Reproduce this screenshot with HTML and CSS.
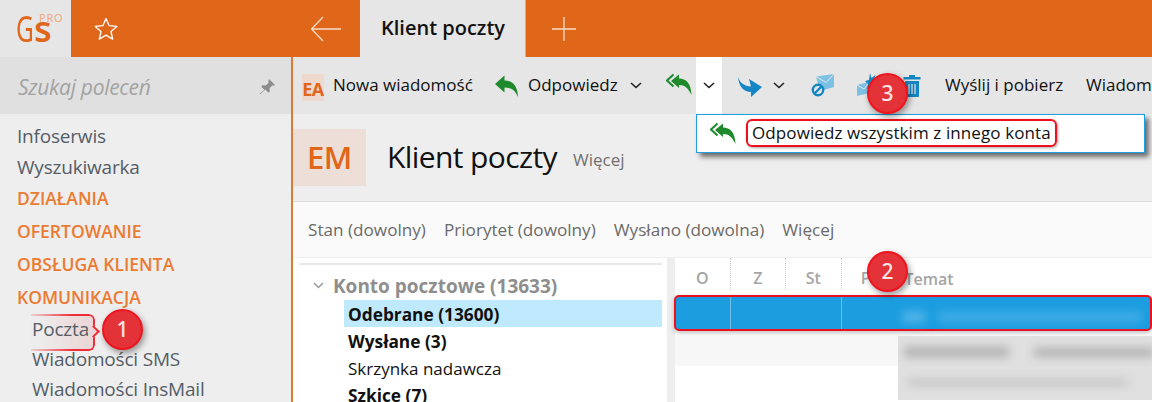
FILE: index.html
```html
<!DOCTYPE html>
<html lang="pl">
<head>
    <meta charset="UTF-8">
    <title>Klient poczty</title>
    <link rel="stylesheet" href="styles.css">
</head>
<body>

    <div class="topbar">
        <div class="logo">
            <span class="logo-g">G</span><span class="logo-s">s</span><span class="logo-pro">PRO</span>
        </div>
        <div class="top-left">
            <svg class="star" width="26" height="26" viewBox="0 0 26 26"><path d="M13 2.500l3.100 7.200 7.700.7-5.800 5.100 1.700 7.600-6.700-4-6.700 4 1.700-7.600-5.800-5.100 7.700-.7z" fill="none" stroke="#fff" stroke-width="1.300" stroke-linejoin="round"/></svg>
            <svg class="back" width="32" height="26" viewBox="0 0 32 26"><path d="M31 13H1.500M13 1L1.500 13 13 25" fill="none" stroke="#f6dcc8" stroke-width="1.300"/></svg>
        </div>
        <div class="tab">Klient poczty</div>
        <div class="top-right">
            <svg width="24" height="24" viewBox="0 0 24 24"><path d="M12 0v24M0 12h24" stroke="#f6dcc8" stroke-width="1.300"/></svg>
        </div>
    </div>

    <div class="shell">
        <div class="sidebar">
            <div class="search">
                <span>Szukaj poleceń</span>
                <svg width="18" height="18" viewBox="0 0 18 18"><path d="M11 1l6 6-1.500.8-1-.6-3 3 .3 3.300-1.300 1.300-3.200-3.200L2 16.500l-.5-.5 4.900-4.300-3.200-3.200 1.300-1.300 3.300.3 3-3-.6-1z" fill="#8c8c8c"/></svg>
            </div>
            <div class="menu">
                <div class="menu-item">Infoserwis</div>
                <div class="menu-item">Wyszukiwarka</div>
                <div class="menu-group">DZIAŁANIA</div>
                <div class="menu-group">OFERTOWANIE</div>
                <div class="menu-group">OBSŁUGA KLIENTA</div>
                <div class="menu-group">KOMUNIKACJA</div>
                <div class="menu-item sub">
                    <span class="poczta">Poczta</span>
                </div>
                <div class="menu-item sub">Wiadomości SMS</div>
                <div class="menu-item sub">Wiadomości InsMail</div>
            </div>
        </div>

        <div class="main">
            <div class="toolbar">
                <span class="tile-small">EA</span>
                <span class="tool-label first">Nowa wiadomość</span>
                <svg class="reply" width="25" height="24" viewBox="0 0 25 24"><path d="M1 10L10.500 1.500V6.500C18 6.500 23.500 11 24 23 21 16 17 13.500 10.500 13.500V18.500Z" fill="#1e8a2c"/></svg>
                <span class="tool-label odp">Odpowiedz</span>
                <svg class="chev odp-chev" width="12" height="7" viewBox="0 0 12 7"><path d="M1 1l5 4.500L11 1" fill="none" stroke="#222" stroke-width="1.600"/></svg>
                <svg class="reply-all" width="26" height="23" viewBox="0 0 26 23"><path d="M7.500 1.500L1 7.500l6.500 6" fill="none" stroke="#1e8a2c" stroke-width="2"/><path d="M5 8L13 1.500V5.500C20 5.500 25 10 25.500 22 22 15 19 12 13 12V15Z" fill="#1e8a2c"/></svg>
                <span class="chev-box">
                    <svg class="chev" width="12" height="7" viewBox="0 0 12 7"><path d="M1 1l5 4.500L11 1" fill="none" stroke="#222" stroke-width="1.600"/></svg>
                </span>
                <svg class="forward" width="26" height="24" viewBox="0 0 26 24"><path d="M1 2C3 8 7 11 14 11.500L12 4 25 12 14 22 14 17C7 17 2 12 1 2Z" fill="#1586c4"/></svg>
                <svg class="chev fwd-chev" width="12" height="7" viewBox="0 0 12 7"><path d="M1 1l5 4.500L11 1" fill="none" stroke="#222" stroke-width="1.600"/></svg>
                <svg class="mail-block" width="24" height="24" viewBox="0 0 24 24"><path d="M5 2.500L23 0V13L9 17Z" fill="#7cc0e4"/><path d="M5 2.500l10 6 8-8.500" fill="none" stroke="#e6e6e6" stroke-width="1"/><circle cx="7" cy="16" r="5.200" fill="#e6e6e6" stroke="#1586c4" stroke-width="2.400"/><path d="M3.500 19.500l7-7" stroke="#1586c4" stroke-width="2.400"/></svg>
                <svg class="mail-star" width="24" height="24" viewBox="0 0 24 24"><path d="M0 12L12 9V20L0 23Z" fill="#7cc0e4"/><path d="M0 12l7 4 5-7" fill="none" stroke="#e6e6e6" stroke-width="1"/><path d="M13 0l1.500 5 4-3-1.500 5 5 .5-4 3 4 3-5 .5-1 5-3-4-3 1 1-5-3-3 4-1z" fill="#1586c4"/></svg>
                <svg class="trash" width="18" height="23" viewBox="0 0 18 23"><path d="M6 1h6v2h5.500v2.500H.5V3H6zM2 7h14v15a1 1 0 0 1-1 1H3a1 1 0 0 1-1-1z" fill="#1586c4"/><path d="M6 10v10M9 10v10M12 10v10" stroke="#e6e6e6" stroke-width="1.200"/></svg>
                <span class="tool-label send">Wyślij i pobierz</span>
                <span class="tool-label wiad">Wiadomości</span>
            </div>

            <div class="heading">
                <span class="tile-big">EM</span>
                <span class="title">Klient poczty</span>
                <span class="more">Więcej</span>
            </div>

            <div class="filters">
                <span>Stan (dowolny)</span>
                <span>Priorytet (dowolny)</span>
                <span>Wysłano (dowolna)</span>
                <span>Więcej</span>
            </div>

            <div class="content">
                <div class="tree">
                    <div class="tree-root">
                        <svg width="11" height="7" viewBox="0 0 11 7"><path d="M1 1l4.500 4.500L10 1" fill="none" stroke="#999" stroke-width="1.500"/></svg>
                        <span>Konto pocztowe (13633)</span>
                    </div>
                    <div class="folder bold selected">Odebrane (13600)</div>
                    <div class="folder bold">Wysłane (3)</div>
                    <div class="folder">Skrzynka nadawcza</div>
                    <div class="folder bold">Szkice (7)</div>
                </div>
                <div class="list">
                    <div class="list-head">
                        <span class="col">O</span>
                        <span class="col">Z</span>
                        <span class="col">St</span>
                        <span class="col">Pr</span>
                        <span class="col-subject">Temat</span>
                    </div>
                    <div class="row-selected">
                        <div class="cell-a"></div>
                        <div class="cell-b"></div>
                        <div class="cell-subject"><i class="blur-light short"></i><i class="blur-light long"></i></div>
                    </div>
                    <div class="row-grey"><div class="blur-block"><i class="blur-dark l1"></i><i class="blur-dark l2"></i><i class="blur-dark l3"></i></div></div>
                </div>
            </div>
        </div>
    </div>

    <div class="dropdown">
        <svg width="26" height="23" viewBox="0 0 26 23"><path d="M7.500 1.500L1 7.500l6.500 6" fill="none" stroke="#1e8a2c" stroke-width="2"/><path d="M5 8L13 1.500V5.500C20 5.500 25 10 25.500 22 22 15 19 12 13 12V15Z" fill="#1e8a2c"/></svg>
        <span class="dropdown-label">Odpowiedz wszystkim z innego konta</span>
    </div>

    <div class="badge badge-1">1</div>
    <div class="badge badge-2">2</div>
    <div class="badge badge-3">3</div>

</body>
</html>
```

FILE: styles.css
```css
* {
    box-sizing: border-box;
}

body {
    margin: 0;
    height: 402px;
    overflow: hidden;
    position: relative;
    font-family: "Open Sans", "Noto Sans", sans-serif;
    background-color: #eeeeee;
    color: #111;
}

/* top bar */
.topbar {
    display: flex;
    height: 57px;
    background-color: #e0661a;
}

.logo {
    width: 71px;
    background-color: #e6e6e6;
    color: #e0661a;
    padding: 8px 0 0 16px;
    position: relative;
    font-family: "Noto Sans", sans-serif;
    line-height: 42px;
    font-size: 36px;
}

.logo-g {
    display: inline-block;
    width: 18px;
    transform: scaleX(0.68);
    transform-origin: left;
}

.logo-s {
    font-weight: 600;
}

.logo-pro {
    position: absolute;
    left: 39px;
    top: 12px;
    font-size: 11px;
    line-height: 11px;
    letter-spacing: 0.8px;
    color: #eeaa7c;
}

.top-left {
    width: 289px;
    display: flex;
    align-items: center;
    padding-left: 22px;
}

.star {
    margin-right: 191px;
}

.tab {
    width: 166px;
    background-color: #e6e6e6;
    border-right: 1px solid #f0a877;
    font-size: 20px;
    font-weight: 600;
    display: flex;
    align-items: center;
    padding-left: 21px;
    padding-bottom: 2px;
}

.top-right {
    flex-grow: 1;
    display: flex;
    align-items: center;
    padding-left: 26px;
}

/* sidebar */
.shell {
    display: flex;
    height: 345px;
}

.sidebar {
    width: 293px;
    flex-shrink: 0;
    border-right: 2px solid #de7a35;
}

.search {
    height: 57px;
    background-color: #e0e0e0;
    color: #a3a3a3;
    font-style: italic;
    font-size: 21px;
    display: flex;
    justify-content: space-between;
    align-items: center;
    padding: 3px 15px 0 18px;
    letter-spacing: -0.3px;
}

.menu {
    padding-top: 8px;
    padding-left: 17px;
}

.menu-item {
    font-size: 19px;
    height: 31px;
    line-height: 28px;
    color: #555d68;
    letter-spacing: -0.2px;
}

.menu-group {
    font-size: 17.500px;
    font-weight: 600;
    height: 33px;
    line-height: 28px;
    color: #ec7a30;
}

.menu-item.sub {
    padding-left: 15px;
    height: 30px;
    line-height: 27px;
}

.poczta {
    position: relative;
    display: inline-block;
    z-index: 0;
}

/* callout round the first step, fades out to the left */
.poczta::before {
    content: '';
    position: absolute;
    z-index: -1;
    left: -1px;
    top: -2px;
    width: 62px;
    height: 33px;
    border: 2px solid #ef2d36;
    border-left: none;
    border-radius: 0 6px 6px 0;
    background: linear-gradient(to right, rgba(240, 215, 215, 0.2), #ead6d6);
    -webkit-mask-image: linear-gradient(to right, rgba(0, 0, 0, 0.15), #000 65%);
    mask-image: linear-gradient(to right, rgba(0, 0, 0, 0.15), #000 65%);
}

.poczta::after {
    content: '';
    position: absolute;
    left: 57px;
    top: 11px;
    width: 7px;
    height: 7px;
    background-color: #ead6d6;
    border-top: 2px solid #ef2d36;
    border-right: 2px solid #ef2d36;
    transform: rotate(45deg);
}

/* main column */
.main {
    flex-grow: 1;
    min-width: 0;
    display: flex;
    flex-direction: column;
}

.toolbar {
    height: 57px;
    flex-shrink: 0;
    background-color: #e6e6e6;
    display: flex;
    align-items: center;
    white-space: nowrap;
    overflow: hidden;
    padding-left: 9px;
    font-size: 17px;
}

.tile-small {
    width: 22px;
    height: 27px;
    background-color: #eed9ce;
    color: #e0661a;
    font-size: 18px;
    font-weight: 700;
    text-align: center;
    line-height: 31px;
    flex-shrink: 0;
    margin-top: 3px;
    letter-spacing: -0.5px;
}

.tool-label {
    flex-shrink: 0;
    margin-top: -3px;
}

.first {
    margin-left: 9px;
    width: 161px;
}

.reply {
    flex-shrink: 0;
}

.odp {
    margin-left: 9px;
    width: 102px;
}

.odp-chev {
    flex-shrink: 0;
}

.reply-all {
    flex-shrink: 0;
    margin-left: 24px;
    margin-top: -3px;
}

.chev-box {
    width: 26px;
    height: 57px;
    flex-shrink: 0;
    margin-left: 4px;
    background-color: #fff;
    display: flex;
    align-items: center;
    justify-content: center;
}

.forward {
    flex-shrink: 0;
    margin-left: 15px;
    margin-top: 2px;
}

.fwd-chev {
    flex-shrink: 0;
    margin-left: 10px;
}

.mail-block {
    flex-shrink: 0;
    margin-left: 26px;
}

.mail-star {
    flex-shrink: 0;
    margin-left: 22px;
    margin-top: -2px;
}

.trash {
    flex-shrink: 0;
    margin-left: 22px;
}

.send {
    margin-left: 24px;
    width: 141px;
}

.wiad {
    flex-shrink: 0;
}

.heading {
    height: 88px;
    flex-shrink: 0;
    display: flex;
    align-items: center;
    background-color: #eeeeee;
    border-bottom: 1px solid #dddddd;
}

.tile-big {
    width: 73px;
    height: 57px;
    background-color: #eddfd7;
    color: #e0661a;
    font-size: 31px;
    font-weight: 600;
    text-align: center;
    line-height: 57px;
    margin-top: -1px;
    letter-spacing: -0.5px;
}

.title {
    font-size: 30px;
    margin-left: 21px;
    letter-spacing: -0.6px;
    margin-top: -2px;
}

.more {
    font-size: 17px;
    color: #707070;
    margin-left: 16px;
    margin-top: 4px;
}

.filters {
    height: 56px;
    flex-shrink: 0;
    background-color: #fafafa;
    border-bottom: 1px solid #eeeeee;
    display: flex;
    align-items: center;
    gap: 18px;
    padding-left: 15px;
    font-size: 17.150px;
    color: #6a6a6a;
}

.content {
    flex-grow: 1;
    display: flex;
    background-color: #fff;
    min-height: 0;
}

.tree {
    width: 382px;
    flex-shrink: 0;
    padding: 5px 5px 0 6px;
    background-color: #fff;
    border-right: 8px solid #eeeeee;
    overflow: hidden;
}

.tree-root {
    border-top: 2px solid #e9e9e9;
    height: 37px;
    padding: 6px 0 0 14px;
    display: flex;
    align-items: center;
    gap: 9px;
    font-size: 19px;
    font-weight: 700;
    color: #8e8e8e;
}

.folder {
    margin-left: 45px;
    height: 27px;
    line-height: 29px;
    padding-left: 4px;
    font-size: 17px;
    white-space: nowrap;
}

.bold {
    font-size: 17.300px;
    font-weight: 700;
}

.selected {
    background-color: #bfeafd;
}

.list {
    flex-grow: 1;
    min-width: 0;
    background-color: #fff;
}

.list-head {
    height: 37px;
    display: flex;
    align-items: center;
    font-size: 16px;
    font-weight: 600;
    color: #a5a5a5;
}

.col {
    width: 55.500px;
    height: 32px;
    margin-bottom: 5px;
    padding-top: 8px;
    border-right: 1px dotted #c8c8c8;
    display: flex;
    align-items: center;
    justify-content: center;
}

.col:nth-child(4) {
    border-right: none;
    width: 55px;
}

.col-subject {
    margin-left: 8px;
    padding-top: 4px;
}

.row-selected {
    height: 36px;
    margin-left: -1px;
    display: flex;
    background-color: #1b9de0;
    border: 2px solid #ef0f1c;
    border-radius: 5px;
    box-shadow: 0 2px 5px rgba(0, 0, 0, 0.25);
}

.cell-a {
    width: 55px;
    border-right: 1px solid #70bde8;
}

.cell-b {
    width: 111px;
    border-right: 1px solid #70bde8;
}

.cell-subject {
    flex-grow: 1;
    display: flex;
    gap: 12px;
    align-items: center;
    padding: 7px 8px 0 60px;
}

.blur-light {
    height: 12px;
    background-color: #4fb3e8;
    filter: blur(4px);
    display: block;
}

.short {
    width: 24px;
}

.long {
    flex-grow: 1;
    background-color: #3eabe5;
}

.row-grey {
    height: 30px;
    margin-top: 5px;
    background-color: #f7f7f7;
    position: relative;
}

.blur-block {
    position: absolute;
    left: 223px;
    right: 0;
    top: 0;
    height: 64px;
    background-color: #e0e0e0;
    overflow: hidden;
}

.blur-dark {
    position: absolute;
    display: block;
    filter: blur(5px);
    background-color: #b0b0b0;
}

.l1 {
    left: 6px;
    top: 11px;
    width: 105px;
    height: 10px;
}

.l2 {
    left: 136px;
    top: 12px;
    width: 120px;
    height: 9px;
}

.l3 {
    left: 10px;
    top: 43px;
    width: 220px;
    height: 7px;
    background-color: #c4c4c4;
}

/* things lying over the page */
.dropdown {
    position: absolute;
    left: 696px;
    top: 114px;
    width: 449px;
    height: 39px;
    background-color: #fff;
    border: 1px solid #1aa0e0;
    box-shadow: 4px 4px 5px rgba(0, 0, 0, 0.55);
    display: flex;
    align-items: center;
    padding-left: 13px;
}

.dropdown-label {
    margin-left: 10px;
    width: 311px;
    height: 28px;
    line-height: 23px;
    border: 2px solid #ef0f1c;
    border-radius: 6px;
    padding-left: 4px;
    font-size: 17px;
    letter-spacing: 0.1px;
    white-space: nowrap;
    box-shadow: 1px 1px 3px rgba(0, 0, 0, 0.35);
    margin-bottom: 1px;
}

.badge {
    position: absolute;
    width: 41px;
    height: 41px;
    border-radius: 50%;
    background-color: #e33238;
    border: 2px solid #f0141e;
    color: #fbe4e4;
    font-family: "Noto Sans", sans-serif;
    font-size: 21px;
    font-weight: 500;
    text-align: center;
    line-height: 36px;
    box-shadow: 2px 3px 6px rgba(0, 0, 0, 0.4);
}

.badge-1 {
    left: 102px;
    top: 309px;
}

.badge-2 {
    left: 867px;
    top: 251px;
}

.badge-3 {
    left: 867px;
    top: 73px;
}
```
